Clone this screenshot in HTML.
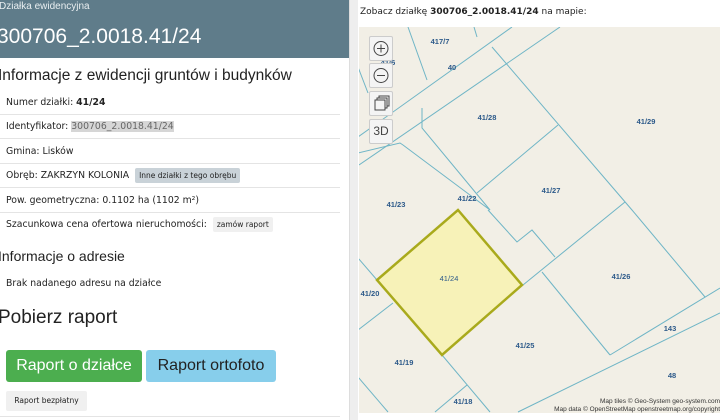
<!DOCTYPE html>
<html><head><meta charset="utf-8"><style>
*{box-sizing:border-box;margin:0;padding:0}
body{width:720px;height:420px;overflow:hidden;background:#fff;font-family:"DejaVu Sans","Liberation Sans",sans-serif;position:relative;color:#222}
.left{position:absolute;left:0;top:0;width:349px;height:420px;background:#fff}
.hdr{background:#5f7c8a;height:58px;color:#fff;position:relative}
.hdr .s{position:absolute;left:-1px;top:1px;font-size:10px;color:#e8eef0;font-family:"Liberation Sans",sans-serif}
.hdr .t{position:absolute;left:-3px;top:25px;font-size:21px;font-family:"Liberation Sans",sans-serif}
h2{position:absolute;left:-2px;font-weight:normal;font-family:"Liberation Sans",sans-serif;font-size:15.5px;color:#222}
.row{position:absolute;left:0;width:340px;height:24px;border-bottom:1px solid #e4e4e4;font-size:9.3px;padding-left:6px;line-height:24px}
.tag{display:inline-block;background:#c9d2d8;font-size:7.5px;padding:0 4px;line-height:15px;border-radius:2px;margin-left:3px}
.gut{position:absolute;left:349px;top:0;width:9px;height:420px;background:#eee;border-left:1px solid #ddd}
.btn{position:absolute;top:350px;height:32px;border-radius:3px;font-family:"Liberation Sans",sans-serif;font-size:16px;line-height:32px;text-align:center}
.map{position:absolute;left:359px;top:27px;width:361px;height:386px;background:#f2efe6;overflow:hidden}
.ctl{position:absolute;left:369px;width:24px;height:25px;background:#f4f4f4;border:1px solid #ccc;border-radius:2px;text-align:center;line-height:23px;color:#444}
</style></head><body>
<div class="left">
<div class="hdr"><div class="s">Działka ewidencyjna</div><div class="t">300706_2.0018.41/24</div></div>
<h2 style="top:67px">Informacje z ewidencji gruntów i budynków</h2>
<div class="row" style="top:91px">Numer działki: <b>41/24</b></div>
<div class="row" style="top:115px">Identyfikator: <span style="background:#d6d6d6;color:#666">300706_2.0018.41/24</span></div>
<div class="row" style="top:140px">Gmina: Lisków</div>
<div class="row" style="top:164px">Obręb: ZAKRZYN KOLONIA <span class="tag">Inne działki z tego obrębu</span></div>
<div class="row" style="top:189px">Pow. geometryczna: 0.1102 ha (1102 m²)</div>
<div class="row" style="top:213px;border:none">Szacunkowa cena ofertowa nieruchomości: <span class="tag" style="background:#f0f0f0">zamów raport</span></div>
<h2 style="top:248px;font-size:14px">Informacje o adresie</h2>
<div class="row" style="top:272px;border:none">Brak nadanego adresu na działce</div>
<h2 style="top:307px;font-size:19px">Pobierz raport</h2>
<div class="btn" style="left:6px;width:136px;background:#4cae4f;color:#fff">Raport o działce</div>
<div class="btn" style="left:146px;width:130px;background:#87ceeb;color:#222">Raport ortofoto</div>
<div style="position:absolute;left:6px;top:391px;width:81px;height:20px;background:#f0f0f0;border-radius:2px;font-size:7.5px;line-height:20px;text-align:center">Raport bezpłatny</div>
<div style="position:absolute;left:0;top:416px;width:340px;border-top:1px solid #e4e4e4"></div>
</div>
<div class="gut"></div>
<div style="position:absolute;left:360px;top:7px;font-size:9px;color:#222">Zobacz działkę <b>300706_2.0018.41/24</b> na mapie:</div>
<div class="map">
<svg width="361" height="386" viewBox="359 27 361 386" style="position:absolute;left:0;top:0">
<g stroke="#6fb5c6" stroke-width="1" fill="none">
<line x1="358" y1="137" x2="512" y2="27"/>
<line x1="359" y1="165" x2="560" y2="27"/>
<line x1="408" y1="27" x2="427" y2="80"/>
<line x1="358" y1="67" x2="368" y2="93"/>
<line x1="474" y1="27" x2="477" y2="37"/>
<polyline points="422,108 422,128 490,210"/>
<polyline points="492,47 632,210 705,297"/>
<line x1="558" y1="125" x2="477" y2="193"/>
<polyline points="358,153 400,143 403,145 490,210"/>
<polyline points="488,210 517,242 532,230 555,257"/>
<line x1="523" y1="285" x2="625" y2="202"/>
<line x1="542" y1="272" x2="610" y2="355"/>
<line x1="610" y1="355" x2="720" y2="288"/>
<line x1="518" y1="412" x2="720" y2="313"/>
<line x1="358" y1="330" x2="393" y2="303"/>
<line x1="358" y1="258" x2="377" y2="280"/>
<line x1="442" y1="355" x2="490" y2="412"/>
<line x1="467" y1="385" x2="435" y2="412"/>
<line x1="358" y1="377" x2="388" y2="412"/>
</g>
<polygon points="458,210 522,285 442,355 377,280" fill="#f7f2b8" stroke="#a9aa1c" stroke-width="2.5"/>
<g fill="#2d5a8a" font-size="7.5" font-family="Liberation Sans,sans-serif" font-weight="bold" text-anchor="middle">
<text x="440" y="44">417/7</text><text x="388" y="65">41/6</text><text x="452" y="70">40</text>
<text x="487" y="120">41/28</text><text x="646" y="124">41/29</text><text x="551" y="193">41/27</text>
<text x="467" y="201">41/22</text><text x="396" y="207">41/23</text><text x="449" y="281" font-weight="normal">41/24</text>
<text x="370" y="296">41/20</text><text x="621" y="279">41/26</text><text x="670" y="331">143</text>
<text x="525" y="348">41/25</text><text x="404" y="365">41/19</text><text x="672" y="378">48</text><text x="463" y="404">41/18</text>
</g>
<g fill="#333" font-size="6.5" font-family="Liberation Sans,sans-serif" text-anchor="end">
<text x="720" y="403">Map tiles © Geo-System geo-system.com</text>
<text x="720" y="411">Map data © OpenStreetMap openstreetmap.org/copyright</text>
</g>
</svg>
</div>
<div class="ctl" style="top:36px"><svg width="22" height="23"><circle cx="11" cy="11.5" r="7" fill="none" stroke="#444"/><path d="M7 11.5h8M11 7.5v8" stroke="#444"/></svg></div>
<div class="ctl" style="top:63px"><svg width="22" height="23"><circle cx="11" cy="11.5" r="7" fill="none" stroke="#444"/><path d="M7 11.5h8" stroke="#444"/></svg></div>
<div class="ctl" style="top:91px"><svg width="22" height="23"><rect x="5" y="8" width="10" height="10" fill="#f4f4f4" stroke="#444"/><path d="M7 8V6h10v10h-2M9 6V4h10v10h-2" fill="none" stroke="#444"/></svg></div>
<div class="ctl" style="top:119px;font-size:12px;font-family:'Liberation Sans',sans-serif">3D</div>
</body></html>
